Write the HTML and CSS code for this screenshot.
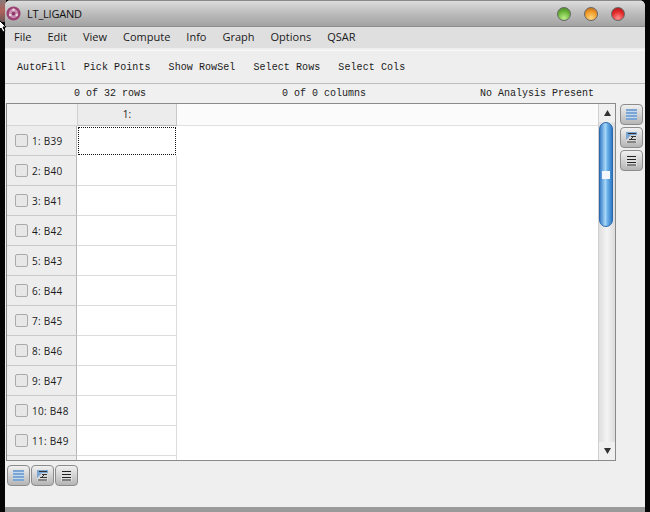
FILE: index.html
```html
<!DOCTYPE html>
<html>
<head>
<meta charset="utf-8">
<title>LT_LIGAND</title>
<link rel="stylesheet" href="styles.css">
</head>
<body>
<div class="desk"></div>
<svg class="pointer" width="7" height="13" viewBox="0 0 7 13"><path d="M-1 0L6 7H3L5 11L3 12L1 8L-1 10z" fill="#fff" stroke="#000"/></svg>
<div class="window">
  <header class="titlebar">
    <svg class="appicon" width="15" height="15" viewBox="0 0 16 16"><circle cx="8" cy="8" r="7.5" fill="#9c3f72"/><circle cx="8" cy="8" r="5" fill="#c98fb0"/><circle cx="8" cy="8" r="2" fill="#8f3a69"/><circle cx="8" cy="4" r="1.3" fill="#eadbe4"/><circle cx="11.5" cy="9.5" r="1.3" fill="#eadbe4"/><circle cx="4.5" cy="9.5" r="1.3" fill="#eadbe4"/></svg>
    <span class="title">LT_LIGAND</span>
    <span class="lights">
      <i class="light green"></i><i class="light orange"></i><i class="light red"></i>
    </span>
  </header>
  <nav class="menubar">
    <span>File</span><span>Edit</span><span>View</span><span>Compute</span><span>Info</span><span>Graph</span><span>Options</span><span>QSAR</span>
  </nav>
  <div class="toolbar">
    <span>AutoFill</span><span>Pick Points</span><span>Show RowSel</span><span>Select Rows</span><span>Select Cols</span>
  </div>
  <div class="status">
    <span class="s1">0 of 32 rows</span><span class="s2">0 of 0 columns</span><span class="s3">No Analysis Present</span>
  </div>
  <div class="main">
    <div class="tablebox">
      <div class="table">
        <div class="headrow"><div class="corner"></div><div class="colhead">1:</div><div class="rest"></div></div>
        <div class="row"><div class="rowhead"><i class="check"></i>1: B39</div><div class="cell current"></div></div>
        <div class="row"><div class="rowhead"><i class="check"></i>2: B40</div><div class="cell"></div></div>
        <div class="row"><div class="rowhead"><i class="check"></i>3: B41</div><div class="cell"></div></div>
        <div class="row"><div class="rowhead"><i class="check"></i>4: B42</div><div class="cell"></div></div>
        <div class="row"><div class="rowhead"><i class="check"></i>5: B43</div><div class="cell"></div></div>
        <div class="row"><div class="rowhead"><i class="check"></i>6: B44</div><div class="cell"></div></div>
        <div class="row"><div class="rowhead"><i class="check"></i>7: B45</div><div class="cell"></div></div>
        <div class="row"><div class="rowhead"><i class="check"></i>8: B46</div><div class="cell"></div></div>
        <div class="row"><div class="rowhead"><i class="check"></i>9: B47</div><div class="cell"></div></div>
        <div class="row"><div class="rowhead"><i class="check"></i>10: B48</div><div class="cell"></div></div>
        <div class="row"><div class="rowhead"><i class="check"></i>11: B49</div><div class="cell"></div></div>
        <div class="row"><div class="rowhead"></div><div class="cell"></div></div>
      </div>
      <div class="scrollbar">
        <div class="arrow"><svg width="7" height="6" viewBox="0 0 7 6"><path d="M3.5 0L7 6H0z" fill="#333"/></svg></div>
        <div class="track"><div class="thumb"><div class="grip"></div></div></div>
        <div class="arrow"><svg width="7" height="6" viewBox="0 0 7 6"><path d="M0 0H7L3.5 6z" fill="#333"/></svg></div>
      </div>
    </div>
    <div class="sidebtns">
      <button class="tool"><svg width="11" height="11" viewBox="0 0 11 11"><rect width="11" height="11" fill="#7ba6d3"/><path d="M0 2.5H11M0 5.5H11M0 8.5H11" stroke="#c5d9ee"/></svg></button>
      <button class="tool"><svg width="11" height="11" viewBox="0 0 11 11"><rect width="11" height="11" fill="#d8d8d8"/><path d="M0 0H11V3H5L0 8z" fill="#7ba6d3"/><path d="M2 1.5H10M5 4.5H10M3 7.5H10M1 10H10M8 4L4 8" stroke="#333"/></svg></button>
      <button class="tool"><svg width="11" height="11" viewBox="0 0 11 11"><rect width="11" height="11" fill="#dedede"/><path d="M1 1.5H10M1 4.5H10M1 7.5H10M1 10H10" stroke="#222"/></svg></button>
    </div>
  </div>
  <div class="bottombtns">
    <button class="tool"><svg width="11" height="11" viewBox="0 0 11 11"><rect width="11" height="11" fill="#7ba6d3"/><path d="M0 2.5H11M0 5.5H11M0 8.5H11" stroke="#c5d9ee"/></svg></button>
    <button class="tool"><svg width="11" height="11" viewBox="0 0 11 11"><rect width="11" height="11" fill="#d8d8d8"/><path d="M0 0H11V3H5L0 8z" fill="#7ba6d3"/><path d="M2 1.5H10M5 4.5H10M3 7.5H10M1 10H10M8 4L4 8" stroke="#333"/></svg></button>
    <button class="tool"><svg width="11" height="11" viewBox="0 0 11 11"><rect width="11" height="11" fill="#dedede"/><path d="M1 1.5H10M1 4.5H10M1 7.5H10M1 10H10" stroke="#222"/></svg></button>
  </div>
  <div class="grow"></div>
  <div class="footer"></div>
</div>
</body>
</html>
```
FILE: styles.css
```css
* { box-sizing: border-box; }
html, body { margin: 0; height: 512px; overflow: hidden; background: #050505; }
body { padding: 0 5px 0 5px; }
.desk { position: absolute; left: 0; top: 0; width: 6px; height: 22px; background: linear-gradient(#8a7a78, #b0605a 50%, #6a5a58); }
.pointer { position: absolute; left: 0; top: 20px; z-index: 2; }
.window { display: flex; flex-direction: column; position: relative; height: 512px; background: #efefef; border-radius: 6px 6px 0 0; overflow: hidden; font-family: "Open Sans", "Noto Sans", sans-serif; color: #1a1a1a; }
.titlebar { flex: none; height: 27px; display: flex; align-items: center; padding: 0 20px 0 1px; background: linear-gradient(#dcdcdc, #bcbcbc 50%, #a2a2a2); border-top: 1px solid #8a8a8a; border-bottom: 1px solid #8d8d8d; }
.appicon { flex: none; }
.title { margin-left: 6px; font-size: 11px; letter-spacing: -0.2px; color: #111; }
.lights { margin-left: auto; display: flex; gap: 13px; }
.light { width: 14px; height: 14px; border-radius: 50%; border: 1px solid #666; }
.green { background: radial-gradient(circle at 50% 85%, #bdf08a, #6cb63a 55%, #3f7f22); }
.orange { background: radial-gradient(circle at 50% 85%, #ffd880, #f09a28 55%, #b9641a); }
.red { background: radial-gradient(circle at 50% 85%, #ff8f8f, #e32a2a 55%, #a41818); }
.menubar { flex: none; height: 21px; display: flex; align-items: center; padding: 1px 0 4px 9px; gap: 16px; background: #dfdfdf; font-size: 11px; }
.toolbar { flex: none; height: 34px; margin-top: 2px; display: flex; align-items: center; padding-left: 12px; gap: 18px; background: #eeeeee; border-top: 1px solid #f8f8f8; border-bottom: 1px solid #bdbdbd; font-family: "Liberation Mono", monospace; font-size: 10px; letter-spacing: 0.08px; }
.status { flex: none; height: 19px; display: flex; align-items: center; font-family: "Liberation Mono", monospace; font-size: 10px; color: #222; background: #f0f0f0; }
.status span { white-space: pre; }
.s1 { margin-left: 69px; }
.s2 { margin-left: 136px; }
.s3 { margin-left: 114px; }
.main { flex: none; display: flex; height: 358px; }
.tablebox { flex: none; width: 610px; margin-left: 1px; display: flex; border: 1px solid #8a8a8a; background: #fff; }
.table { flex: 1; overflow: hidden; display: flex; flex-direction: column; }
.headrow { flex: none; height: 22px; display: flex; }
.corner { width: 70px; background: #f1f1f1; border-bottom: 1px solid #d6d6d6; }
.colhead { width: 100px; background: #ececec; border-left: 1px solid #d0d0d0; border-right: 1px solid #c8c8c8; border-bottom: 1px solid #b5b5b5; text-align: center; font-size: 10px; line-height: 21px; }
.rest { flex: 1; background: #fbfbfb; border-bottom: 1px solid #e0e0e0; }
.row { flex: none; height: 30px; display: flex; }
.rowhead { width: 70px; display: flex; align-items: center; padding-left: 8px; background: #ededed; border-bottom: 1px solid #c9c9c9; border-right: 1px solid #b8b8b8; font-size: 10px; letter-spacing: 0.3px; white-space: nowrap; }
.check { flex: none; width: 13px; height: 13px; margin-right: 4px; border: 1px solid #aaa; border-radius: 2px; background: #e7e7e7; }
.cell { width: 100px; border-bottom: 1px solid #dcdcdc; border-right: 1px solid #dcdcdc; }
.cell.current { border: 1px dotted #111; margin: 1px; width: 98px; height: 28px; }
.scrollbar { flex: none; width: 17px; display: flex; flex-direction: column; background: linear-gradient(90deg, #dedede, #f4f4f4 50%, #dcdcdc); border-left: 1px solid #d0d0d0; }
.arrow { flex: none; height: 18px; display: flex; align-items: center; justify-content: center; background: #f0f0f0; }
.track { flex: 1; padding: 0 2px 0 0; }
.thumb { height: 105px; display: flex; align-items: center; justify-content: center; border-radius: 7px; border: 1px solid #2c68ae; background: linear-gradient(90deg, #3b7fc7, #a8d8f8 45%, #71b5ec 60%, #2e78c4); }
.grip { width: 8px; height: 8px; background: #f4f8fc; }
.sidebtns { flex: none; display: flex; flex-direction: column; gap: 2px; margin-left: 4px; padding-top: 1px; }
.bottombtns { flex: none; display: flex; gap: 1px; padding: 4px 0 0 2px; }
.tool { width: 23px; height: 21px; padding: 0; display: flex; align-items: center; justify-content: center; border: 1px solid #8c8c8c; border-radius: 4px; background: linear-gradient(#f0f0f0, #b5b5b5); }
.grow { flex: 1; }
.footer { flex: none; height: 5px; background: #9a9a9a; }
```
